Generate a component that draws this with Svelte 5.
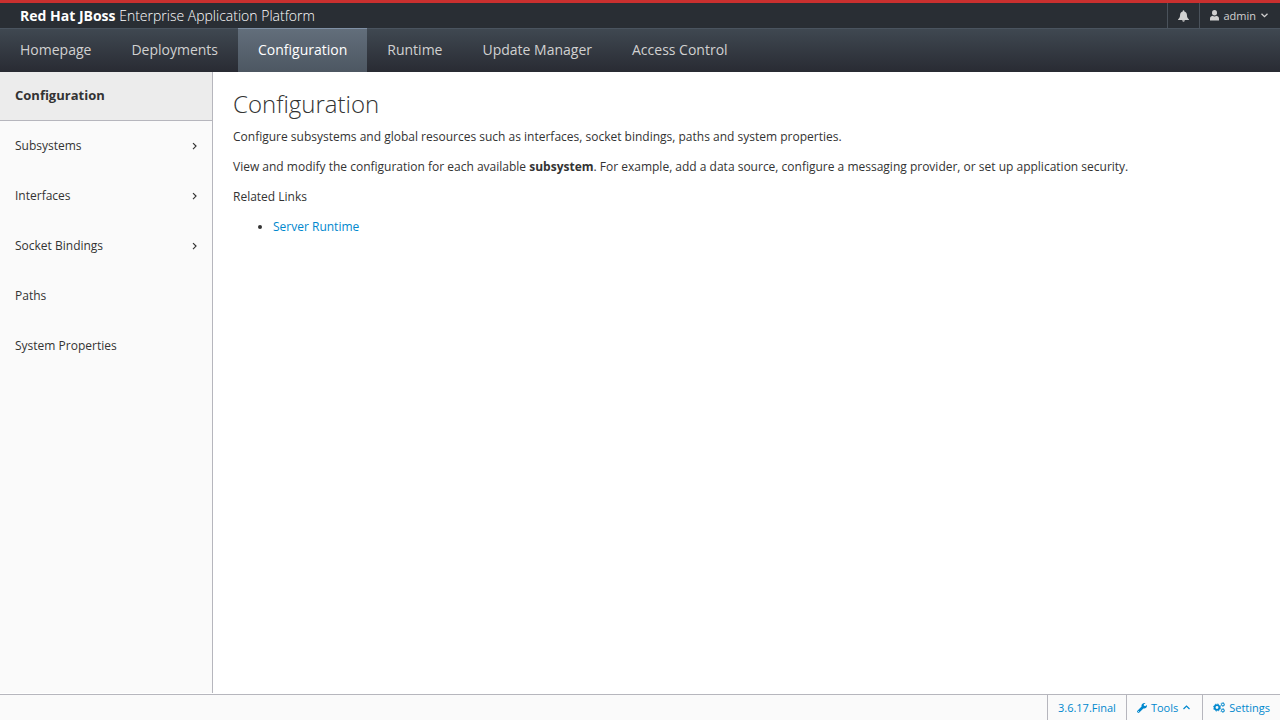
<script lang="ts">
	interface NavItem {
		label: string;
		active?: boolean;
	}

	interface SidebarItem {
		label: string;
		expandable: boolean;
	}

	const navItems: NavItem[] = [
		{ label: 'Homepage' },
		{ label: 'Deployments' },
		{ label: 'Configuration', active: true },
		{ label: 'Runtime' },
		{ label: 'Update Manager' },
		{ label: 'Access Control' }
	];

	const sidebarItems: SidebarItem[] = [
		{ label: 'Subsystems', expandable: true },
		{ label: 'Interfaces', expandable: true },
		{ label: 'Socket Bindings', expandable: true },
		{ label: 'Paths', expandable: false },
		{ label: 'System Properties', expandable: false }
	];
</script>

<div class="console">
	<header>
		<div class="masthead">
			<div class="product"><strong>Red Hat JBoss</strong> Enterprise Application Platform</div>
			<div class="utility">
				<button class="bell" aria-label="Notifications">
					<svg width="11" height="12" viewBox="0 0 11 12" fill="currentColor">
						<path d="M5.5 0.3a.8.8 0 0 1 .8.8v.3C8 1.8 8.9 3.1 8.9 4.7c0 2.4.7 3.7 2 4.6v.7H.1v-.7c1.3-.9 2-2.2 2-4.600 0-1.600.9-2.900 2.600-3.300v-.3a.8.8 0 0 1 .8-.8z" />
						<path d="M4.100 10.300h2.800a1.400 1.400 0 0 1-2.800 0z" />
					</svg>
				</button>
				<button class="user">
					<svg width="9" height="11" viewBox="0 0 9 11" fill="currentColor">
						<ellipse cx="4.500" cy="2.800" rx="2.500" ry="2.700" />
						<path d="M0 10.600V8.700C0 6.900 1 6.100 2.500 5.700c1.200 1 2.800 1 4 0C8 6.100 9 6.900 9 8.700v1.900z" />
					</svg>
					admin
					<svg class="caret" width="7" height="5" viewBox="0 0 7 5" fill="none" stroke="currentColor" stroke-width="1.300">
						<path d="M0.500 0.700L3.500 3.700L6.500 0.700" />
					</svg>
				</button>
			</div>
		</div>
		<nav class="primary">
			{#each navItems as item}
				<a href="#{item.label}" class:active={item.active}>{item.label}</a>
			{/each}
		</nav>
	</header>

	<div class="body">
		<aside>
			<div class="sidebar-title">Configuration</div>
			<ul>
				{#each sidebarItems as item}
					<li>
						<a href="#{item.label}">
							{item.label}
							{#if item.expandable}
								<svg width="5" height="8" viewBox="0 0 5 8" fill="none" stroke="currentColor" stroke-width="1.200">
									<path d="M1 1.100L4 4.100L1 7.100" />
								</svg>
							{/if}
						</a>
					</li>
				{/each}
			</ul>
		</aside>
		<main>
			<h1>Configuration</h1>
			<p>Configure subsystems and global resources such as interfaces, socket bindings, paths and system properties.</p>
			<p>View and modify the configuration for each available <strong>subsystem</strong>. For example, add a data source, configure a messaging provider, or set up application security.</p>
			<p>Related Links</p>
			<ul>
				<li><a href="#runtime">Server Runtime</a></li>
			</ul>
		</main>
	</div>

	<footer>
		<button>3.6.17.Final</button>
		<button>
			<svg width="10" height="10" viewBox="0 0 10 10" fill="currentColor">
				<path fill-rule="evenodd" d="M9.800 2.100L8.100 3.200 6.800 2.500V1.200L8.500.2C7.500-.2 6 .1 5.200 1c-.7.7-.9 1.700-.6 2.600L.4 7.700a1.150 1.150 0 0 0 0 1.600l.3.300c.5.500 1.200.5 1.600 0L6.400 5.400c1 .3 2 .1 2.700-.6.800-.800 1-1.800.7-2.700zM1.500 8a.5.5 0 1 1 0 1 .5.5 0 0 1 0-1z" />
			</svg>
			Tools
			<svg class="caret" width="7" height="5" viewBox="0 0 7 5" fill="none" stroke="currentColor" stroke-width="1.200">
				<path d="M0.500 4L3.500 1L6.500 4" />
			</svg>
		</button>
		<button>
			<svg width="12" height="11" viewBox="0 0 12 11" fill="none" stroke="currentColor">
				<circle cx="4" cy="5.500" r="2.300" stroke-width="1.700" />
				<circle cx="4" cy="5.500" r="3.500" stroke-width="1" stroke-dasharray="1.450 1.300" />
				<circle cx="9.800" cy="2.500" r="1.300" stroke-width="1" />
				<circle cx="9.800" cy="2.500" r="2" stroke-width=".7" stroke-dasharray="1.050 1.050" />
				<circle cx="9.800" cy="8.500" r="1.300" stroke-width="1" />
				<circle cx="9.800" cy="8.500" r="2" stroke-width=".7" stroke-dasharray="1.050 1.050" />
			</svg>
			Settings
		</button>
	</footer>
</div>

<style>
	:global(body) {
		margin: 0;
	}

	.console {
		display: flex;
		flex-direction: column;
		min-height: 100vh;
		font-family: "Open Sans", "Noto Sans", sans-serif;
		font-size: 12px;
		line-height: 20px;
		color: #333;
		background: #fff;
	}

	a {
		color: #0088ce;
		text-decoration: none;
	}

	button {
		display: flex;
		align-items: center;
		gap: 4px;
		margin: 0;
		border: 0;
		background: none;
		font-family: inherit;
		font-size: 11px;
		line-height: 20px;
		cursor: pointer;
	}

	.masthead {
		display: flex;
		justify-content: space-between;
		height: 25px;
		border-top: 3px solid #c9302f;
		background: #292e34;
		color: #fff;
	}

	.product {
		padding-left: 20px;
		font-size: 14px;
		font-weight: 300;
		line-height: 26px;
	}

	.product strong {
		font-weight: 700;
	}

	.utility {
		display: flex;
	}

	.utility button {
		border-left: 1px solid #4a525b;
		color: #d1d1d1;
	}

	.utility .bell {
		padding: 0 10px;
	}

	.utility .user {
		padding: 0 12px 0 10px;
	}

	.caret {
		margin-left: 1px;
	}

	.primary {
		display: flex;
		border-top: 1px solid #4a545f;
		background: linear-gradient(#3f4851, #292b33);
	}

	.primary a {
		margin-top: -1px;
		padding: 11px 20px 12px;
		border-top: 1px solid transparent;
		color: #d1d1d1;
		font-size: 14px;
	}

	.primary a.active {
		border-top-color: #7f90a5;
		background: linear-gradient(#626e7b, #4d5762);
		color: #fff;
	}

	.body {
		display: flex;
		flex: 1;
	}

	aside {
		flex: none;
		width: 212px;
		margin-bottom: 1px;
		border-right: 1px solid #b6b6bd;
		background: #fafafa;
	}

	.sidebar-title {
		padding: 13px 15px 15px;
		border-bottom: 1px solid #b6b6bd;
		background: #ececec;
		font-size: 13px;
		font-weight: 700;
	}

	aside ul {
		margin: 0;
		padding: 0;
		list-style: none;
	}

	aside li a {
		display: flex;
		align-items: center;
		justify-content: space-between;
		padding: 15px;
		color: #333;
	}

	main {
		flex: 1;
		padding: 19px 20px;
	}

	h1 {
		margin: 0 0 10px;
		font-size: 24px;
		font-weight: 300;
		line-height: 26px;
	}

	p {
		margin: 0 0 10px;
	}

	main ul {
		margin: 0;
		padding-left: 40px;
	}

	footer {
		display: flex;
		justify-content: flex-end;
		height: 25px;
		border-top: 1px solid #b6b6bd;
		background: #fafafa;
	}

	footer button {
		padding: 0 10px;
		border-left: 1px solid #b6b6bd;
		color: #0088ce;
	}

	footer .caret {
		margin-right: 2px;
	}
</style>
